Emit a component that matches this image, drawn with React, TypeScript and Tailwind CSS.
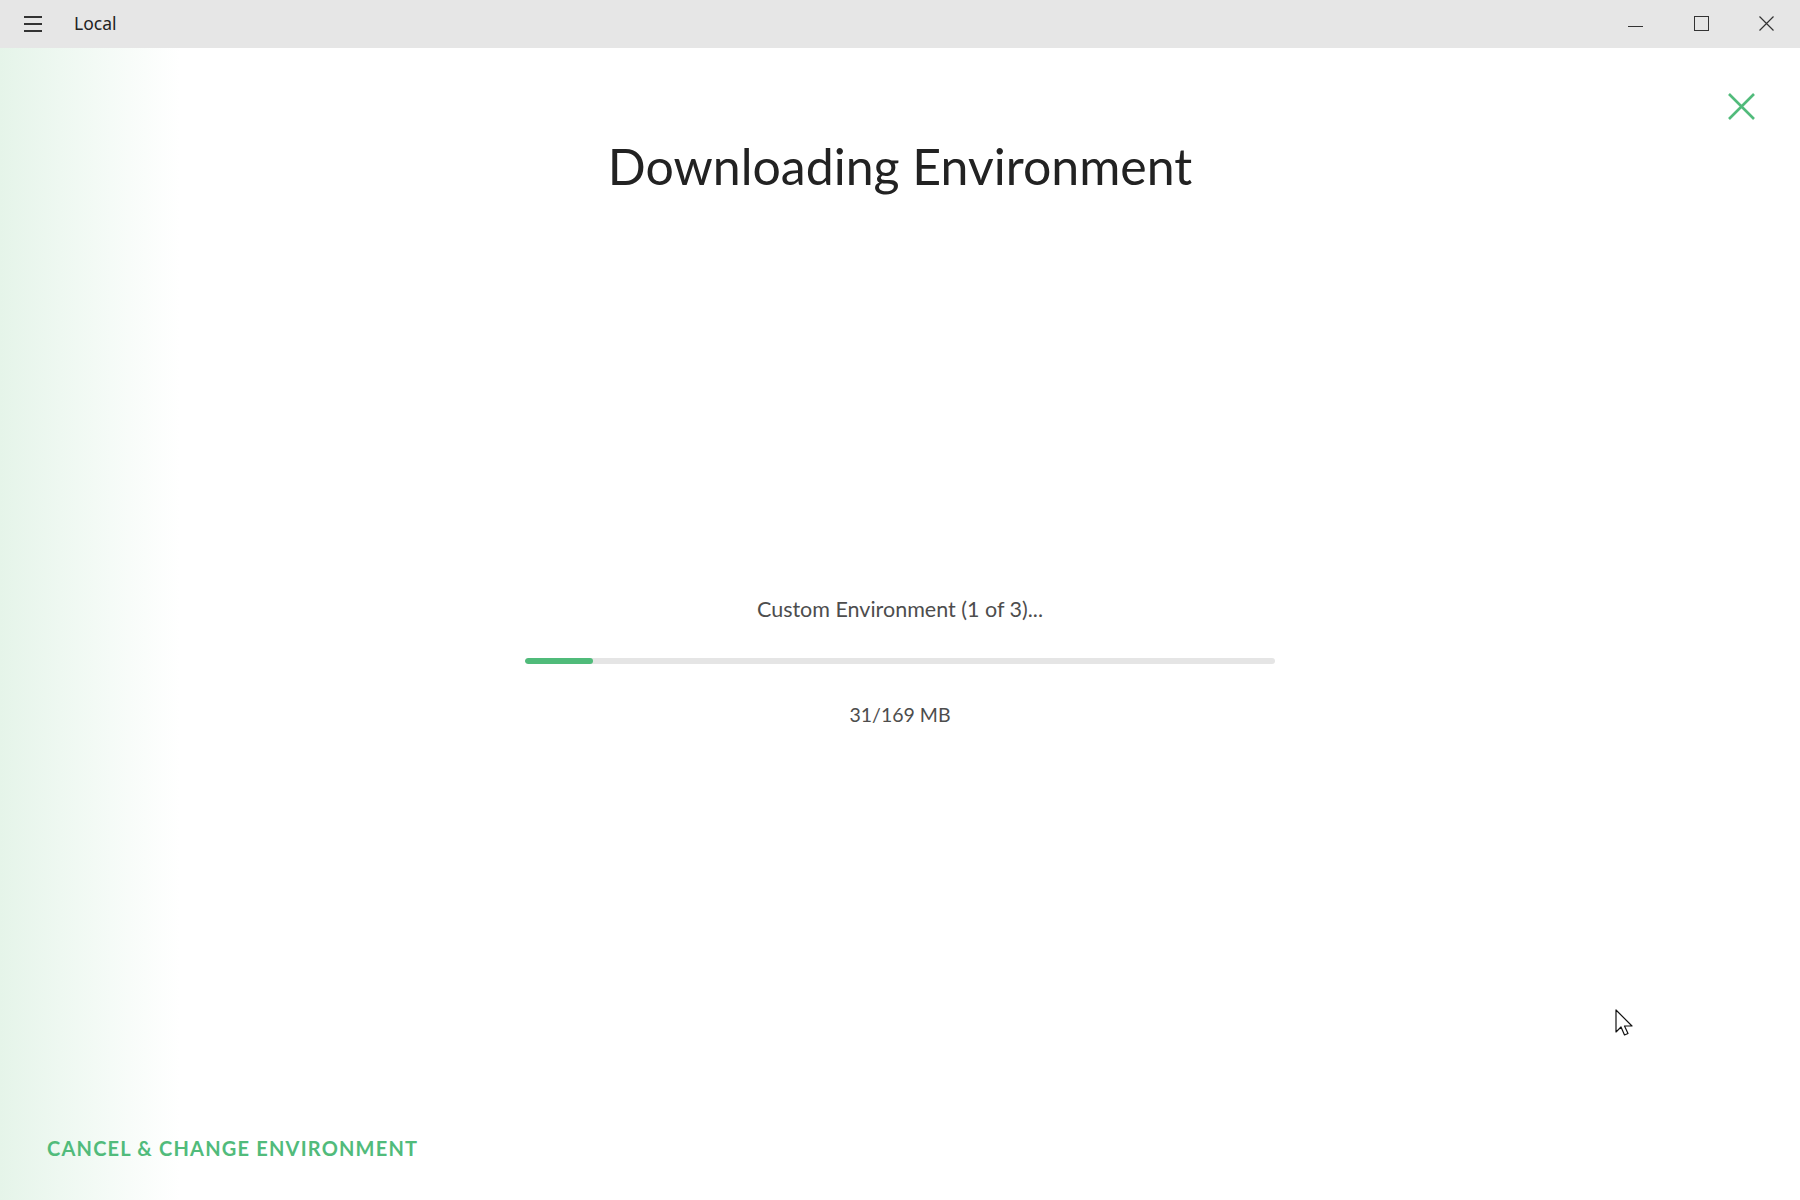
import React from 'react';

function TitleBar() {
  return (
    <div className="h-[48px] shrink-0 flex items-center bg-[#e6e6e6] font-['Noto_Sans',sans-serif] text-[#222]">
      <div className="ml-[24px] w-[18px] flex flex-col gap-[5.5px]">
        <div className="h-[1.5px] bg-[#333]" />
        <div className="h-[1.5px] bg-[#333]" />
        <div className="h-[1.5px] bg-[#333]" />
      </div>
      <span className="ml-[32px] text-[17.5px] leading-none">Local</span>
      <div className="ml-auto flex items-center h-full">
        <div className="w-[66px] h-full flex items-center justify-center">
          <div className="w-[15px] h-[1.5px] mt-[5px] bg-[#333]" />
        </div>
        <div className="w-[66px] h-full flex items-center justify-center">
          <div className="w-[15px] h-[15px] border-[1.5px] border-[#333] -mt-[1px]" />
        </div>
        <div className="w-[66px] h-full flex items-center justify-center">
          <svg width="15" height="15" viewBox="0 0 15 15" className="-mt-[1px] -ml-[2px]">
            <path d="M0.5 0.5 L14.5 14.5 M14.5 0.5 L0.5 14.5" stroke="#333" strokeWidth="1.2" fill="none" />
          </svg>
        </div>
      </div>
    </div>
  );
}

export default function App() {
  const done = 31;
  const total = 169;
  const pct = (68 / 750) * 100;

  return (
    <div className="w-[1800px] h-[1200px] flex flex-col overflow-hidden bg-white">
      <TitleBar />
      <main className="relative flex-1 flex flex-col bg-[linear-gradient(to_right,#e5f4e9_0px,#eef8f1_60px,#ffffff_180px)] font-['Lato',sans-serif]">
        <button className="absolute top-[45px] right-[45px] w-[27px] h-[27px]">
          <svg width="27" height="27" viewBox="0 0 27 27">
            <path d="M1 1 L26 26 M26 1 L1 26" stroke="#51bb7b" strokeWidth="2.6" fill="none" />
          </svg>
        </button>

        <h1 className="mt-[93px] text-center text-[50px] leading-none text-[#222]">Downloading Environment</h1>

        <div className="mt-[408px] flex flex-col items-center">
          <p className="text-[21.5px] leading-none text-[#4d4d4d]">Custom Environment (1 of 3)...</p>
          <div className="mt-[37px] w-[750px] h-[6px] rounded-full bg-[#e5e5e5] overflow-hidden">
            <div className="h-full rounded-full bg-[#50bb7a]" style={{ width: `${pct}%` }} />
          </div>
          <p className="mt-[41px] text-[19.5px] leading-none text-[#4d4d4d]">
            {done}/{total} MB
          </p>
        </div>

        <div className="flex-1" />

        <div className="pl-[47px] pb-[38px]">
          <button className="text-[20px] leading-none font-bold tracking-[1.2px] text-[#51bb7b]">
            CANCEL &amp; CHANGE ENVIRONMENT
          </button>
        </div>

        <svg
          className="absolute left-[1615px] top-[961px]"
          width="20"
          height="30"
          viewBox="0 0 20 30"
        >
          <path d="M1 1 L1 23 L6 18 L9.5 26 L13 24.5 L9.5 17 L17 17 Z" fill="#fff" stroke="#111" strokeWidth="1.2" strokeLinejoin="round" />
        </svg>
      </main>
    </div>
  );
}
